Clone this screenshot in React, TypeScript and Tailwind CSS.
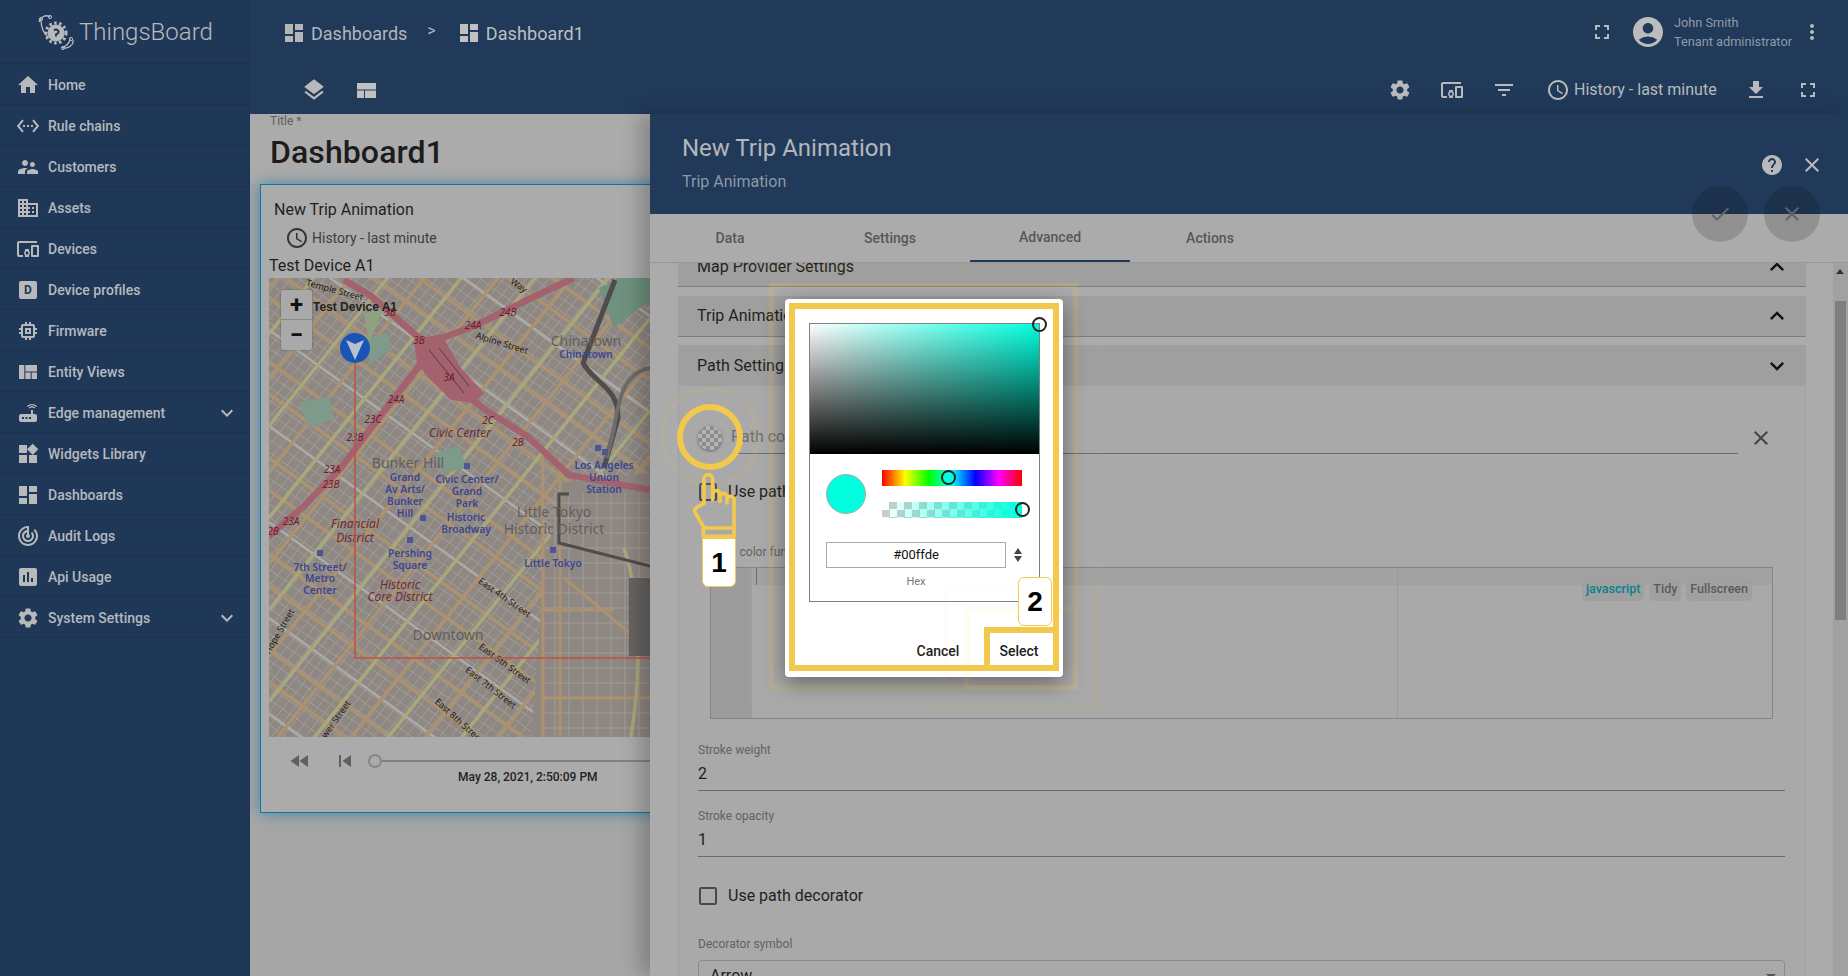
import {
  MdAccessTime, MdAccountCircle, MdCheck, MdClose, MdDashboard, MdDevicesOther, MdDomain, MdExpandLess, MdExpandMore,
  MdFastRewind, MdFileDownload, MdFilterList, MdFullscreen, MdHelp, MdHome, MdLayers, MdMemory, MdMoreVert, MdPoll,
  MdRouter, MdSettings, MdSettingsEthernet, MdSkipPrevious, MdSupervisorAccount, MdTrackChanges,
  MdViewQuilt, MdWidgets,
} from "react-icons/md";

const menu = [
  { label: "Home", icon: <MdHome size={24} /> },
  { label: "Rule chains", icon: <MdSettingsEthernet size={24} /> },
  { label: "Customers", icon: <MdSupervisorAccount size={24} /> },
  { label: "Assets", icon: <MdDomain size={24} /> },
  { label: "Devices", icon: <MdDevicesOther size={24} /> },
  {
    label: "Device profiles",
    icon: (
      <span className="w-[18px] h-[18px] rounded-[2px] bg-[#b8b9bb] text-[#213a5a] text-[12px] font-bold flex items-center justify-center">
        D
      </span>
    ),
  },
  { label: "Firmware", icon: <MdMemory size={24} /> },
  { label: "Entity Views", icon: <MdViewQuilt size={24} /> },
  { label: "Edge management", icon: <MdRouter size={24} />, more: true },
  { label: "Widgets Library", icon: <MdWidgets size={24} /> },
  { label: "Dashboards", icon: <MdDashboard size={24} /> },
  { label: "Audit Logs", icon: <MdTrackChanges size={24} /> },
  { label: "Api Usage", icon: <MdPoll size={24} /> },
  { label: "System Settings", icon: <MdSettings size={24} />, more: true },
];

type MapLabel = [string, number, number, string, number?];

// map labels: text, x, y, style, rotation
const mapLabels: MapLabel[] = [
  ["Chinatown", 317, 68, "grey"],
  ["Chinatown", 317, 80, "blue"],
  ["Alpine Street", 232, 68, "street", 17],
  ["Temple Street", 65, 15, "street", 15],
  ["Way", 248, 10, "street", 35],
  ["Civic Center", 191, 159, "red"],
  ["Bunker Hill", 139, 190, "grey"],
  ["Grand", 136, 203, "blue"],
  ["Av Arts/", 136, 215, "blue"],
  ["Bunker", 136, 227, "blue"],
  ["Hill", 136, 239, "blue"],
  ["Civic Center/", 198, 205, "blue"],
  ["Grand", 198, 217, "blue"],
  ["Park", 198, 229, "blue"],
  ["Historic", 197, 243, "blue"],
  ["Broadway", 197, 255, "blue"],
  ["Little Tokyo", 285, 239, "grey"],
  ["Historic District", 285, 256, "grey"],
  ["Los Angeles", 335, 191, "blue"],
  ["Union", 335, 203, "blue"],
  ["Station", 335, 215, "blue"],
  ["Little Tokyo", 284, 289, "blue"],
  ["Pershing", 141, 279, "blue"],
  ["Square", 141, 291, "blue"],
  ["Financial", 86, 250, "red"],
  ["District", 86, 264, "red"],
  ["7th Street/", 51, 293, "blue"],
  ["Metro", 51, 304, "blue"],
  ["Center", 51, 316, "blue"],
  ["Historic", 131, 311, "red"],
  ["Core District", 131, 323, "red"],
  ["Downtown", 179, 362, "grey"],
  ["East 4th Street", 234, 322, "street", 35],
  ["East 5th Street", 234, 388, "street", 36],
  ["East 7th Street", 220, 412, "street", 38],
  ["East 8th Street", 188, 445, "street", 42],
  ["Hope Street", 13, 355, "street", -60],
  ["Flower Street", 66, 448, "street", -55],
  ["24B", 239, 38, "ref"],
  ["24A", 204, 51, "ref"],
  ["3B", 150, 66, "ref"],
  ["3A", 180, 103, "ref"],
  ["24A", 127, 125, "ref"],
  ["23C", 104, 145, "ref"],
  ["23B", 86, 163, "ref"],
  ["2C", 219, 146, "ref"],
  ["2B", 249, 168, "ref"],
  ["23A", 63, 195, "ref"],
  ["23B", 62, 210, "ref"],
  ["23A", 22, 247, "ref"],
  ["2B", 4, 257, "ref"],
  ["3B", 121, 38, "ref"],
];

const labelStyle: Record<string, { size: number; fill: string; weight?: number; italic?: boolean }> = {
  grey: { size: 14, fill: "#5f5f5f" },
  blue: { size: 10.2, fill: "#3b4690", weight: 600 },
  red: { size: 12, fill: "#6f2a36", italic: true },
  street: { size: 9, fill: "#1f1c18" },
  ref: { size: 10, fill: "#6e1c2c", italic: true },
};

const stations = [[198, 188], [141, 262], [51, 275], [284, 272], [329, 170], [336, 174], [154, 240]];

const seq = (from: number, to: number, step: number) => {
  const out: number[] = [];
  for (let v = from; v <= to; v += step) out.push(v);
  return out;
};

function TripMap() {
  return (
    <div className="relative w-[381px] h-[459px] shrink-0">
      <svg viewBox="0 0 381 459" className="block w-[381px] h-[459px]" fontFamily="'Noto Sans',sans-serif">
        <rect width="381" height="459" fill="#8f8782" />
        {/* minor streets */}
        {seq(-320, 520, 13).map((c) => (
          <line key={`a${c}`} x1="0" y1={c} x2="381" y2={c + 274} stroke="#a19e9b" strokeWidth="1" />
        ))}
        {seq(0, 960, 14).map((c) => (
          <line key={`b${c}`} x1="0" y1={c} x2="381" y2={c - 476} stroke="#a19e9b" strokeWidth="1" />
        ))}
        {/* main streets */}
        {seq(-300, 500, 32).map((c, i) => (
          <line key={`c${c}`} x1="0" y1={c} x2="381" y2={c + 274} stroke={i % 3 === 2 ? "#aeaba7" : "#ab9270"} strokeWidth={i % 3 === 2 ? 2.5 : 3.5} />
        ))}
        {seq(10, 950, 46).map((c, i) => (
          <line key={`d${c}`} x1="0" y1={c} x2="381" y2={c - 476} stroke={i % 2 ? "#a8a87c" : "#ab9270"} strokeWidth="3.5" />
        ))}
        {/* orthogonal blocks east of the grid */}
        <polygon points="290,205 381,195 381,459 262,459 275,300" fill="#8f8782" />
        {seq(286, 376, 14).map((x) => (
          <line key={`v${x}`} x1={x} y1="215" x2={x} y2="459" stroke="#a09d9a" strokeWidth="1" />
        ))}
        {seq(225, 455, 15).map((y) => (
          <line key={`h${y}`} x1="276" y1={y} x2="381" y2={y} stroke="#a09d9a" strokeWidth="1" />
        ))}
        <path d="M274 170V459M291 180V459M272 332H345M272 420H381" stroke="#ab9270" strokeWidth="3" fill="none" />
        <path d="M355 270C372 320 372 400 362 459" stroke="#a8a87c" strokeWidth="3.5" fill="none" />
        <path d="M295 300L381 372" stroke="#ab9270" strokeWidth="3" fill="none" />
        <rect x="360" y="300" width="21" height="78" fill="#666361" />
        {/* parks */}
        <path d="M95 60L118 55 122 72 102 85ZM30 125L60 118 65 140 40 150ZM165 175L190 168 198 190 175 195Z" fill="#7d9a8a" />
        <path d="M330 10L352 0H381V22L345 50Z" fill="#6f917f" />
        <path d="M95 35L115 30 100 65Z" fill="#8fa27e" />
        {/* freeways */}
        <path d="M75 2L102 18 150 60 182 105 218 133 258 158 300 197 381 212" stroke="#a4626e" strokeWidth="6.5" fill="none" />
        <path d="M0 258L35 228 72 190 102 150 150 88 168 62 205 48 275 14 305 0" stroke="#a4626e" strokeWidth="6.5" fill="none" />
        <path d="M145 62L172 56 192 90 215 115 205 125 182 122 160 100 148 85Z" fill="#a4626e" />
        <path d="M160 72L195 115M170 70L200 108" stroke="#5a3a40" strokeWidth="1" fill="none" />
        {/* rail */}
        <path d="M346 2L314 85C325 105 350 110 349 140L335 190" stroke="#4e4d4c" strokeWidth="5" fill="none" />
        <path d="M381 90C355 95 350 120 345 150L338 180" stroke="#6e6c6a" strokeWidth="4" fill="none" />
        <path d="M300 216H290V265L381 288" stroke="#4e4d4c" strokeWidth="3" fill="none" />
        {stations.map(([x, y]) => (
          <rect key={`${x}-${y}`} x={x - 3} y={y - 3} width="6" height="6" fill="#4c5693" />
        ))}
        {mapLabels.map(([text, x, y, kind, rot], i) => {
          const s = labelStyle[kind];
          return (
            <text
              key={i}
              x={x}
              y={y}
              textAnchor="middle"
              fontSize={s.size}
              fill={s.fill}
              fontWeight={s.weight}
              fontStyle={s.italic ? "italic" : undefined}
              transform={rot ? `rotate(${rot} ${x} ${y})` : undefined}
            >
              {text}
            </text>
          );
        })}
        {/* route */}
        <path d="M86 70V380H381" stroke="#bd5246" strokeWidth="1.5" fill="none" />
        <circle cx="86" cy="70" r="15" fill="#1a55b5" />
        <path d="M77 62L86 66 95 62 86 82Z" fill="#b9c2cc" />
      </svg>
      {/* zoom control + tooltip label */}
      <div className="absolute left-[12px] top-[12px] w-[31px] h-[60px] rounded-[2px] bg-[#a9a9a9] shadow-[0_0_2px_rgba(0,0,0,0.4)] flex flex-col text-[#111]">
        <span className="h-[30px] border-b border-[#8a8a8a] flex items-center justify-center text-[24px] font-bold leading-none">+</span>
        <span className="h-[30px] flex items-center justify-center text-[24px] font-bold leading-none">−</span>
      </div>
      <span className="absolute left-[44px] top-[21px] text-[12px] leading-[16px] font-bold text-[#222] font-['Liberation_Sans',sans-serif]">Test Device A1</span>
    </div>
  );
}

function Logo() {
  return (
    <svg viewBox="0 0 36 36" className="w-9 h-9" fill="none" stroke="#b9babc">
      <circle cx="18" cy="19" r="8" fill="#b9babc" />
      <circle cx="18" cy="19" r="10" strokeWidth="3" strokeDasharray="2.5 2.5" />
      <path d="M16 16.5q2-2 4 0t-2 4v2" stroke="#213a5a" strokeWidth="2" />
      <path d="M1 8C2 3 8 0 12 3M35 26c1 5-5 9-10 8M3 5c0 8 2 14 7 18M23 34c5-2 9-4 9-10" strokeWidth="1.3" />
      <circle cx="3" cy="5" r="1.6" />
      <circle cx="12" cy="3" r="1.6" />
      <circle cx="25" cy="34" r="1.6" />
      <circle cx="33" cy="25" r="1.6" />
    </svg>
  );
}

function Sidebar() {
  return (
    <aside className="w-[250px] shrink-0 h-full bg-[#1f3858] text-[#b6b9be] border-r border-[#1d3352]">
      <div className="h-[64px] flex items-center pl-[38px] gap-[5px] border-b border-[#1c3250]">
        <Logo />
        <span className="text-[24px] text-[#b8babd] font-light">ThingsBoard</span>
      </div>
      {menu.map((item) => (
        <div key={item.label} className="h-[41px] flex items-center border-b border-[#1c3250] pl-[16px] pr-[10px] pt-[2px]">
          <span className="w-[24px] h-[24px] flex items-center justify-center text-[#b8b9bb]">{item.icon}</span>
          <span className="ml-[8px] text-[14px] font-medium flex-1">{item.label}</span>
          {item.more && <MdExpandMore size={24} className="text-[#b8b9bb]" />}
        </div>
      ))}
    </aside>
  );
}

function TopBar() {
  return (
    <header className="h-[114px] shrink-0 bg-[#213a5a] text-[#b3b6bb]">
      <div className="h-[64px] flex items-center pl-[32px] pr-[24px] pt-[2px]">
        <MdDashboard size={24} className="text-[#b4b5b7]" />
        <span className="ml-[5px] text-[18px]">Dashboards</span>
        <span className="ml-[20px] mb-[4px] text-[16px]">&gt;</span>
        <span className="ml-[21px]">
          <MdDashboard size={24} className="text-[#c0c0c0]" />
        </span>
        <span className="ml-[5px] text-[18px] tracking-[0.1px] text-[#bdbfc2]">Dashboard1</span>
        <div className="ml-auto flex items-center mb-[2px]">
          <MdFullscreen size={24} className="text-[#b8b9bb]" />
          <MdAccountCircle size={36} className="ml-[16px] text-[#bcbcbc]" />
          <div className="ml-[8px] text-[12.75px] leading-[19px] text-[#8f99a6]">
            <div>John Smith</div>
            <div>Tenant administrator</div>
          </div>
          <MdMoreVert size={24} className="ml-[8px] text-[#b8b9bb]" />
        </div>
      </div>
      <div className="h-[50px] flex items-center pl-[51px] pr-[14px] pt-[2px] text-[#b8b9bb]">
        <MdLayers size={26} />
        <svg viewBox="0 0 19 15" className="ml-[30px] w-[19px] h-[15px]" fill="#c0c0c0">
          <rect width="19" height="6.5" />
          <rect y="7.5" width="7" height="7.5" />
          <rect x="8" y="7.5" width="11" height="7.5" />
        </svg>
        <div className="ml-auto flex items-center">
          <span className="w-[52px] flex justify-center"><MdSettings size={24} /></span>
          <span className="w-[52px] flex justify-center"><MdDevicesOther size={24} /></span>
          <span className="w-[52px] flex justify-center"><MdFilterList size={24} /></span>
          <span className="ml-[16px] w-[184px] flex items-center gap-[4px] text-[16px]">
            <MdAccessTime size={24} />
            History - last minute
          </span>
          <span className="w-[52px] flex justify-center"><MdFileDownload size={24} /></span>
          <span className="w-[52px] flex justify-center"><MdFullscreen size={24} /></span>
        </div>
      </div>
    </header>
  );
}

function Dashboard() {
  return (
    <section className="w-[400px] shrink-0 bg-[#a6a6a6] overflow-hidden">
      <div className="h-[70px] pl-[20px] text-[#1c1c1c] bg-[#ababab] pt-[1px]">
        <div className="text-[12px] leading-[12px] text-[#606060]">Title *</div>
        <div className="mt-[5px] text-[32px] leading-[40px] font-medium tracking-[0.1px]">Dashboard1</div>
      </div>
      <div className="ml-[10px] w-[600px] h-[629px] border border-[#0b78ab] bg-[#ababab] shadow-[0_0_14px_rgba(5,110,160,0.6)] pl-[8px] pt-[13px] text-[#1f1f1f]">
        <div className="h-[24px] pl-[5px] text-[16px] leading-[24px]">New Trip Animation</div>
        <div className="mt-[4px] h-[24px] pl-[16px] flex items-center gap-[3px] text-[14px] text-[#3e3e3e]">
          <MdAccessTime size={24} className="text-[#333]" />
          History - last minute
        </div>
        <div className="mt-[5px] h-[23px] text-[16px] leading-[22px]">Test Device A1</div>
        <TripMap />
        <div className="h-[36px] flex items-center pl-[19px] text-[#5f5f5f] mt-[6px]">
          <MdFastRewind size={24} />
          <MdSkipPrevious size={24} className="ml-[21px]" />
          <span className="ml-[11px] w-[14px] h-[14px] rounded-full border-2 border-[#868686] shrink-0" />
          <span className="h-[2px] w-[300px] bg-[#828282]" />
        </div>
        <div className="ml-[189px] -mt-[10px] text-[12px] leading-[16px] font-medium text-[#222]">May 28, 2021, 2:50:09 PM</div>
      </div>
    </section>
  );
}

function PanelHead({ title, up, className }: { title: string; up?: boolean; className: string }) {
  return (
    <div className={`flex items-center pl-[19px] pr-[15px] bg-[#9f9f9f] border-b border-[#7d7d7d] text-[16px] text-[#1f1f1f] ${className}`}>
      <span className="flex-1">{title}</span>
      {up ? <MdExpandLess size={28} className="text-[#111]" /> : <MdExpandMore size={28} className="text-[#111]" />}
    </div>
  );
}

function Field({ label, value, className }: { label: string; value: string; className: string }) {
  return (
    <div className={className}>
      <div className="h-[16px] text-[12px] leading-[16px] text-[#626262]">{label}</div>
      <div className="h-[33px] flex items-center border-b border-[#6c6c6c] text-[16px] text-[#1f1f1f]">{value}</div>
    </div>
  );
}

function SettingsPanel() {
  return (
    <section className="flex-1 flex flex-col min-w-0 bg-[#ababab] shadow-[-10px_0_18px_rgba(0,0,0,0.22)] z-10">
      <div className="h-[100px] shrink-0 bg-[#213a5a] pl-[32px] pr-[24px] flex justify-between">
        <div className="text-[#b3b6bb] pt-[19px]">
          <div className="text-[24px] leading-[30px]">New Trip Animation</div>
          <div className="mt-[7px] text-[16px] leading-[24px] text-[#8d98a6]">Trip Animation</div>
        </div>
        <div className="flex gap-[16px] pt-[39px] text-[#b8b9bb]">
          <MdHelp size={24} />
          <MdClose size={24} />
        </div>
      </div>
      <div className="h-[49px] shrink-0 flex border-b border-[#979797] text-[14px] font-medium text-[#575757]">
        {["Data", "Settings", "Advanced", "Actions"].map((tab) => (
          <div key={tab} className={`w-[160px] flex items-center justify-center pt-[1px] ${tab === "Advanced" ? "border-b-2 border-[#213a5a]" : ""}`}>
            {tab}
          </div>
        ))}
      </div>
      <div className="flex-1 flex min-h-0 overflow-hidden">
        <div className="flex-1 min-w-0 pl-[28px] pr-[27px]">
          <PanelHead title="Map Provider Settings" up className="h-[40px] -mt-[16px]" />
          <PanelHead title="Trip Animation Settings" up className="h-[41px] mt-[9px]" />
          <PanelHead title="Path Settings" className="h-[41px] mt-[8px] !border-b-0" />
          <div className="h-[620px] bg-[#a9a9a9] border-l border-r border-[#a0a0a0] pl-[19px] pr-[20px] text-[#1f1f1f]">
            <div className="pt-[35px] flex items-center">
              <span className="w-[24px] h-[24px] rounded-full bg-[conic-gradient(#8c8c8c_25%,#b5b5b5_0_50%,#8c8c8c_0_75%,#b5b5b5_0)] bg-[length:8px_8px] shadow-[0_1px_3px_rgba(0,0,0,0.4)]" />
              <div className="ml-[9px] flex-1 h-[33px] flex items-center border-b border-[#6c6c6c] text-[16px] text-[#6e6e6e]">Path color</div>
              <span className="w-[47px] flex justify-end pr-[12px]"><MdClose size={24} className="text-[#444]" /></span>
            </div>
            <div className="mt-[26px] h-[24px] flex items-center">
              <span className="ml-[1px] w-[18px] h-[18px] rounded-[2px] border-2 border-[#4a4a4a]" />
              <span className="ml-[11px] text-[16px]">Use path color function</span>
            </div>
            <div className="mt-[40px] ml-[14px] h-[16px] text-[12px] leading-[16px] text-[#626262]">Path color function</div>
            <div className="mt-[7px] ml-[12px] w-[1063px] h-[152px] border border-[#858585] flex relative">
              <div className="w-[41px] bg-[#9c9c9c]" />
              <div className="flex-1 relative">
                <div className="h-[17px] bg-[#a2a2a2] pl-[4px]"><div className="w-px h-full bg-[#6e6e6e]" /></div>
                <div className="absolute top-0 bottom-0 left-[645px] w-px bg-[#9a9a9a]" />
                <div className="absolute top-[10px] right-[20px] flex gap-[5px] text-[12.5px] font-medium text-[#5a5a5a]">
                  <span className="h-[23px] px-[4px] rounded-[5px] bg-[#a0a0a0] text-[#07818d] flex items-center">javascript</span>
                  <span className="h-[23px] px-[4px] rounded-[5px] bg-[#a0a0a0] flex items-center">Tidy</span>
                  <span className="h-[23px] px-[4px] rounded-[5px] bg-[#a0a0a0] flex items-center">Fullscreen</span>
                </div>
              </div>
            </div>
            <Field label="Stroke weight" value="2" className="mt-[23px]" />
            <Field label="Stroke opacity" value="1" className="mt-[17px]" />
            <div className="mt-[27px] h-[24px] flex items-center">
              <span className="ml-[1px] w-[18px] h-[18px] rounded-[2px] border-2 border-[#4a4a4a]" />
              <span className="ml-[11px] text-[16px]">Use path decorator</span>
            </div>
            <div className="mt-[28px] h-[16px] text-[12px] leading-[16px] text-[#626262]">Decorator symbol</div>
            <div className="mt-[8px] h-[48px] rounded-[4px] border border-[#8a8a8a] pl-[11px] pt-[5px] text-[16px] leading-[20px] flex justify-between pr-[8px]">
              Arrow
              <span className="w-0 h-0 mt-[8px] border-l-[5px] border-r-[5px] border-t-[5px] border-l-transparent border-r-transparent border-t-[#555]" />
            </div>
          </div>
        </div>
        <div className="w-[15px] shrink-0 bg-[#a1a1a1] pt-[38px] relative">
          <span className="absolute top-[6px] left-[3px] w-0 h-0 border-l-[4px] border-r-[4px] border-b-[5px] border-l-transparent border-r-transparent border-b-[#333]" />
          <div className="ml-[2px] w-[11px] h-[319px] bg-[#7e7e7e]" />
        </div>
      </div>
    </section>
  );
}

function Fabs() {
  return (
    <>
      <span className="absolute left-[1692px] top-[186px] w-[56px] h-[56px] rounded-full bg-black/15 flex items-center justify-center text-[#5d6670] z-20">
        <MdCheck size={24} />
      </span>
      <span className="absolute left-[1764px] top-[186px] w-[56px] h-[56px] rounded-full bg-black/15 flex items-center justify-center text-[#5d6670] z-20">
        <MdClose size={24} />
      </span>
    </>
  );
}

function ColorPicker() {
  return (
    <div className="absolute left-[785px] top-[299px] z-30 w-[278px] h-[378px] rounded-[4px] bg-white shadow-[0_6px_22px_rgba(0,0,0,0.4)] p-[24px]">
      <div className="w-[231px] h-[279px] border border-[#808080] relative">
        <div className="h-[130px] bg-[linear-gradient(to_top,#000,transparent),linear-gradient(to_right,#fff,#00ffde)]" />
        <span className="absolute -top-[7px] -right-[8px] w-[15px] h-[15px] rounded-full border-2 border-[#222]" />
        <div className="mt-[16px] ml-[16px] flex items-center">
          <span className="w-[40px] h-[40px] rounded-full bg-[#00ffde] border border-[#aaa]" />
          <div className="ml-[16px] w-[140px] flex flex-col gap-[16px]">
            <div className="h-[16px] relative bg-[linear-gradient(to_right,#f00,#ff0,#0f0,#0ff,#00f,#f0f,#f00)]">
              <span className="absolute left-[59px] top-[0px] w-[15px] h-[15px] rounded-full border-2 border-[#222] bg-[#00ffde]" />
            </div>
            <div className="h-[16px] relative bg-[linear-gradient(to_right,rgba(0,255,222,0),#00ffde),conic-gradient(#ccc_25%,#fff_0_50%,#ccc_0_75%,#fff_0)] bg-[length:100%_100%,15px_15px]">
              <span className="absolute -right-[8px] top-0 w-[15px] h-[15px] rounded-full border-2 border-[#222] bg-[linear-gradient(to_right,#00ffde_50%,#fff_50%)]" />
            </div>
          </div>
        </div>
        <div className="mt-[24px] ml-[16px] flex items-center">
          <div className="w-[180px] h-[26px] border border-[#aaa] flex items-center justify-center text-[13px] text-[#111]">#00ffde</div>
          <div className="ml-[8px] flex flex-col gap-[2px]">
            <span className="w-0 h-0 border-l-[4px] border-r-[4px] border-b-[6px] border-l-transparent border-r-transparent border-b-[#444]" />
            <span className="w-0 h-0 border-l-[4px] border-r-[4px] border-t-[6px] border-l-transparent border-r-transparent border-t-[#444]" />
          </div>
        </div>
        <div className="mt-[6px] ml-[16px] w-[180px] text-center text-[11px] leading-[16px] text-[#777]">Hex</div>
      </div>
      <div className="mt-[31px] -mr-[12px] h-[36px] flex justify-end gap-[17px] text-[14px] font-medium text-[#222]">
        <span className="w-[64px] flex items-center justify-center">Cancel</span>
        <span className="w-[64px] flex items-center justify-center">Select</span>
      </div>
    </div>
  );
}

function Annotations() {
  return (
    <>
      {/* halos */}
      <div className="absolute left-[750px] top-[265px] w-[350px] h-[445px] border-[5px] border-[#f2c94c]/5 z-20" />
      <div className="absolute left-[769px] top-[283px] w-[309px] h-[407px] border-[5px] border-[#f2c94c]/15 z-20" />
      <div className="absolute left-[660px] top-[387px] w-[100px] h-[100px] rounded-full border-[4px] border-[#f2c94c]/10 z-20" />
      <div className="absolute left-[677px] top-[404px] w-[66px] h-[66px] rounded-full border-[6px] border-[#f2c94c] z-40" />
      <svg viewBox="90 340 144 216" className="absolute left-[690px] top-[473px] w-[48px] h-[72px] z-40" fill="none" stroke="#f2c94c" strokeWidth="11" strokeLinecap="round" strokeLinejoin="round">
        <path d="M132 432V358a13 13 0 0 1 26 0V420M158 402a11 11 0 0 1 22 4V425M180 410a10 10 0 0 1 21 4V430M201 418a10 10 0 0 1 21 6V505M132 432C115 440 100 445 105 458L133 505M130 505H222V530H130Z" />
      </svg>
      <div className="absolute left-[702px] top-[538px] w-[34px] h-[49px] rounded-b-[6px] bg-white border border-[#f2c94c] z-40 flex items-center justify-center text-[28px] font-bold text-black font-['Liberation_Sans',sans-serif]">
        1
      </div>

      {/* dialog highlight */}
      <div className="absolute left-[789px] top-[303px] w-[270px] h-[368px] border-[6px] border-[#f2c94c] z-40" />
      <div className="absolute left-[984px] top-[627px] w-[75px] h-[44px] border-[6px] border-[#f2c94c] z-40" />
      <div className="absolute left-[964px] top-[607px] w-[114px] h-[83px] border-[5px] border-[#f2c94c]/8 z-40" />
      <div className="absolute left-[943px] top-[586px] w-[157px] h-[125px] border-[5px] border-[#f2c94c]/3 z-40" />
      <div className="absolute left-[1018px] top-[577px] w-[34px] h-[49px] rounded-[6px] bg-white border border-[#f2c94c] z-40 flex items-center justify-center text-[28px] font-bold text-black font-['Liberation_Sans',sans-serif]">
        2
      </div>
    </>
  );
}

export default function App() {
  return (
    <div className="relative w-[1848px] h-[976px] overflow-hidden flex bg-[#a6a6a6] font-['Roboto',sans-serif]">
      <Sidebar />
      <div className="flex-1 min-w-0 flex flex-col">
        <TopBar />
        <div className="flex-1 flex min-h-0">
          <Dashboard />
          <SettingsPanel />
        </div>
      </div>
      <Fabs />
      <ColorPicker />
      <Annotations />
    </div>
  );
}
